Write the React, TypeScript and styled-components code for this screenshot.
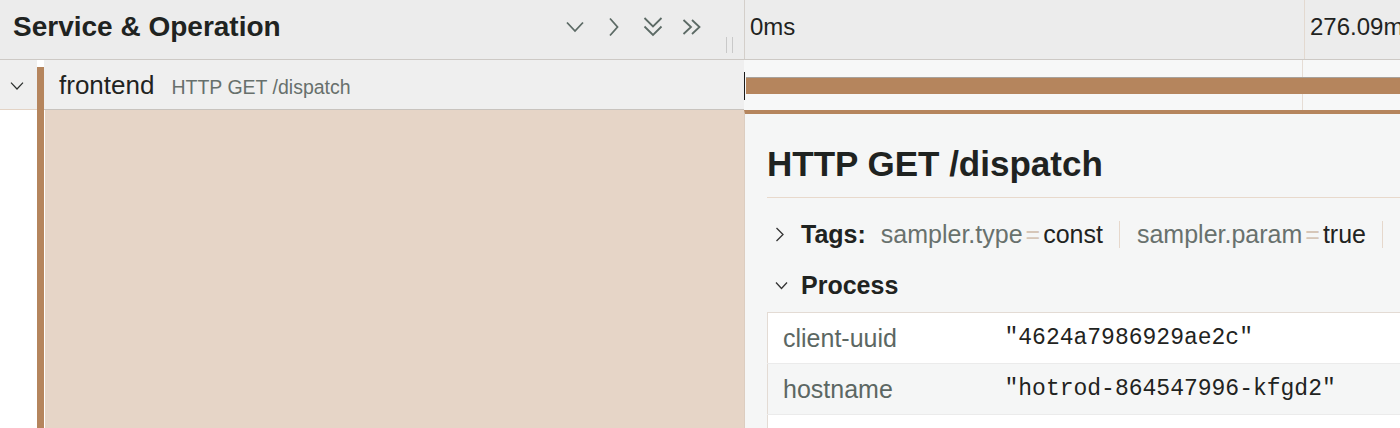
import React from 'react'
import styled, { createGlobalStyle } from 'styled-components';

const SERVICE_COLOR = '#b5855d';
const TICK_OFFSET = 559;

const GlobalStyle = createGlobalStyle`
  html, body {
    margin: 0;
    padding: 0;
    overflow: hidden;
    background: #ffffff;
  }
  body {
    font-family: "Liberation Sans", Arial, Helvetica, sans-serif;
    color: #1f2321;
  }
  * {
    box-sizing: border-box;
  }
`;

// only the rows that fit in view; the last one is the top of the next row
const processTags = [
    { key: 'client-uuid', value: '"4624a7986929ae2c"' },
    { key: 'hostname', value: '"hotrod-864547996-kfgd2"' },
    { key: '', value: '' },
];

const spanTags = [
    { key: 'sampler.type', value: 'const' },
    { key: 'sampler.param', value: 'true' },
];

const ChevronDown = ({ size = 24, stroke = 1.8 }: { size?: number, stroke?: number }) => (
    <svg width={size} height={size} viewBox="0 0 24 24" fill="none" stroke="currentColor" strokeWidth={stroke}>
        <polyline points="4,7.5 12,16 20,7.5" />
    </svg>
);

const ChevronRight = () => (
    <svg width="24" height="24" viewBox="0 0 24 24" fill="none" stroke="currentColor" strokeWidth="1.8">
        <polyline points="8,3.5 15.5,12 8,20.5" />
    </svg>
);

const DoubleDown = () => (
    <svg width="24" height="24" viewBox="0 0 24 24" fill="none" stroke="currentColor" strokeWidth="1.8">
        <polyline points="3.5,3 12,11.5 20.5,3" />
        <polyline points="3.5,11.5 12,20 20.5,11.5" />
    </svg>
);

const DoubleRight = () => (
    <svg width="24" height="24" viewBox="0 0 24 24" fill="none" stroke="currentColor" strokeWidth="1.8">
        <polyline points="3.5,5 11,12 3.5,19" />
        <polyline points="12,5 19.5,12 12,19" />
    </svg>
);

const App = () => {
    return (
        <>
            <GlobalStyle />
            <Page>
                {/* header START */}
                <Header>
                    <HeaderName>
                        <HeaderTitle>Service &amp; Operation</HeaderTitle>
                        <HeaderTools>
                            <ToolButton title="Expand +1"><ChevronDown /></ToolButton>
                            <ToolButton title="Collapse +1"><ChevronRight /></ToolButton>
                            <ToolButton title="Expand All"><DoubleDown /></ToolButton>
                            <ToolButton title="Collapse All"><DoubleRight /></ToolButton>
                        </HeaderTools>
                        <Resizer />
                    </HeaderName>
                    <Ticks>
                        <Tick>0ms</Tick>
                        <Tick>276.09ms</Tick>
                    </Ticks>
                </Header>
                {/* header END */}

                {/* span row START */}
                <SpanRow>
                    <NameCol>
                        <Gutter>
                            <RowToggle><ChevronDown size={18} stroke={1.6} /></RowToggle>
                        </Gutter>
                        <ServiceBar $offset={7} />
                        <NameContent>
                            <ServiceName>frontend</ServiceName>
                            <OperationName>HTTP GET /dispatch</OperationName>
                        </NameContent>
                    </NameCol>
                    <TimelineCol>
                        <SpanBar />
                    </TimelineCol>
                </SpanRow>
                {/* span row END */}

                {/* detail row START */}
                <DetailRow>
                    <DetailName>
                        <Gutter $white />
                        <ServiceBar $offset={0} />
                        <DetailFill />
                    </DetailName>
                    <DetailPanel>
                        <DetailTitle>HTTP GET /dispatch</DetailTitle>

                        <SectionHeader $gap={23}>
                            <SectionToggle>
                                <svg width="10" height="15" viewBox="0 0 10 15" fill="none" stroke="#333" strokeWidth="1.3">
                                    <polyline points="1.5,1 8,7.5 1.5,14" />
                                </svg>
                            </SectionToggle>
                            <SectionLabel>Tags:</SectionLabel>
                            <TagList>
                                {spanTags.map((tag) => (
                                    <TagItem key={tag.key}>
                                        <TagKey>{tag.key}</TagKey>
                                        <TagEq>=</TagEq>
                                        <TagValue>{tag.value}</TagValue>
                                    </TagItem>
                                ))}
                            </TagList>
                        </SectionHeader>

                        <SectionHeader $gap={24}>
                            <SectionToggle>
                                <svg width="13" height="9" viewBox="0 0 13 9" fill="none" stroke="#333" strokeWidth="1.3">
                                    <polyline points="1,1.5 6.5,7.5 12,1.5" />
                                </svg>
                            </SectionToggle>
                            <SectionLabel>Process</SectionLabel>
                        </SectionHeader>

                        <KVTable>
                            <tbody>
                                {processTags.map((row, i) => (
                                    <KVRow key={i}>
                                        <KVKey>{row.key}</KVKey>
                                        <KVValue>{row.value}</KVValue>
                                    </KVRow>
                                ))}
                            </tbody>
                        </KVTable>
                    </DetailPanel>
                </DetailRow>
                {/* detail row END */}
            </Page>
        </>
    )
}

const Page = styled.div`
width: 1400px;
height: 428px;
overflow: hidden;
display: flex;
flex-direction: column;
`;

const Header = styled.div`
display: flex;
height: 60px;
flex-shrink: 0;
background: #ececec;
border-bottom: 1px solid #cdc9c5;
`;

const HeaderName = styled.div`
width: 744px;
flex-shrink: 0;
display: flex;
align-items: center;
padding: 0 0 6px 13px;
`;

const HeaderTitle = styled.h3`
flex: 1;
margin: 0;
font-size: 28px;
line-height: 28px;
font-weight: 700;
color: #1f2321;
white-space: nowrap;
`;

const HeaderTools = styled.div`
display: flex;
align-items: center;
`;

const ToolButton = styled.button`
width: 39px;
height: 28px;
padding: 0;
border: none;
background: transparent;
color: #5c6a65;
display: flex;
align-items: center;
justify-content: center;
cursor: pointer;
`;

const Resizer = styled.div`
align-self: flex-end;
width: 7px;
height: 16px;
margin: 0 11px 0 15px;
border-left: 1px solid #c9c9c9;
border-right: 1px solid #c9c9c9;
`;

const Ticks = styled.div`
flex: 1;
display: grid;
grid-template-columns: ${TICK_OFFSET}px 1fr;
border-left: 1px solid #d4cfca;
`;

const Tick = styled.div`
display: flex;
align-items: center;
padding: 0 0 6px 5px;
font-size: 24px;
line-height: 24px;
color: #1f2321;
white-space: nowrap;

&:not(:first-child) {
    border-left: 1px solid #e3d9d0;
}
`;

const SpanRow = styled.div`
display: flex;
height: 50px;
flex-shrink: 0;
`;

const NameCol = styled.div`
width: 744px;
flex-shrink: 0;
display: flex;
`;

const Gutter = styled.div<{ $white?: boolean }>`
width: 37px;
flex-shrink: 0;
display: flex;
align-items: center;
justify-content: center;
background: ${({ $white }) => ($white ? '#ffffff' : '#efefef')};
border-bottom: ${({ $white }) => ($white ? 'none' : '1px solid #e3d3c5')};
`;

const RowToggle = styled.span`
display: flex;
color: #2a2e2c;
margin: 2px 0 0 -3px;
`;

const ServiceBar = styled.div<{ $offset: number }>`
width: 7px;
flex-shrink: 0;
margin-top: ${({ $offset }) => $offset}px;
background: ${SERVICE_COLOR};
`;

const NameContent = styled.div`
flex: 1;
display: flex;
align-items: baseline;
padding: 12px 0 0 15px;
background: #efefef;
border-bottom: 1px solid #c8c3be;
white-space: nowrap;
`;

const ServiceName = styled.span`
font-size: 26px;
line-height: 26px;
color: #1f2321;
`;

const OperationName = styled.span`
margin-left: 17px;
font-size: 19.5px;
color: #67706c;
`;

const TimelineCol = styled.div`
flex: 1;
position: relative;
padding-top: 17px;
background-color: #f7f8f8;
background-image: linear-gradient(
    to right,
    transparent ${TICK_OFFSET - 1}px,
    #e6ddd5 ${TICK_OFFSET - 1}px,
    #e6ddd5 ${TICK_OFFSET}px,
    transparent ${TICK_OFFSET}px
);

&::before {
    content: '';
    position: absolute;
    left: 0;
    top: 12px;
    width: 1px;
    height: 28px;
    background: #1a1a1a;
}
`;

const SpanBar = styled.div`
height: 17px;
margin-left: 2px;
background: ${SERVICE_COLOR};
border-top: 1px solid #a8a29c;
`;

const DetailRow = styled.div`
flex: 1;
display: flex;
`;

const DetailName = styled.div`
width: 744px;
flex-shrink: 0;
display: flex;
`;

const DetailFill = styled.div`
flex: 1;
margin-left: 1px;
background: #e6d5c7;
`;

const DetailPanel = styled.div`
flex: 1;
min-width: 0;
background: #f5f6f6;
border-top: 4px solid ${SERVICE_COLOR};
border-left: 1px solid #dccdc0;
padding-left: 22px;
`;

const DetailTitle = styled.h2`
margin: 32px 0 0;
padding-bottom: 16px;
font-size: 35px;
line-height: 35px;
font-weight: 700;
color: #1f2321;
border-bottom: 1px solid #e8d9cc;
white-space: nowrap;
`;

const SectionHeader = styled.div<{ $gap: number }>`
display: flex;
align-items: center;
height: 27px;
margin-top: ${({ $gap }) => $gap}px;
padding-left: 8px;
white-space: nowrap;
`;

const SectionToggle = styled.span`
width: 26px;
flex-shrink: 0;
display: flex;
align-items: center;
`;

const SectionLabel = styled.strong`
font-size: 25px;
line-height: 27px;
font-weight: 700;
color: #1f2321;
margin-right: 15px;
`;

const TagList = styled.div`
display: flex;
align-self: stretch;
`;

const TagItem = styled.div`
display: flex;
align-items: center;
padding: 0 16px 0 17px;
font-size: 25px;
line-height: 27px;
border-right: 1px solid #e6d8cc;

&:first-child {
    padding-left: 0;
}
`;

const TagKey = styled.span`
color: #68716d;
`;

const TagEq = styled.span`
color: #d6c6b8;
margin: 0 3px;
`;

const TagValue = styled.span`
color: #1f2321;
`;

const KVTable = styled.table`
margin-top: 13px;
width: 800px;
border-collapse: collapse;
background: #ffffff;
border: 1px solid #e3dbd4;
`;

const KVRow = styled.tr`
height: 51px;
border-bottom: 1px solid #ebebeb;

&:nth-child(even) {
    background: #f5f6f6;
}
`;

const KVKey = styled.td`
width: 222px;
padding: 0 0 0 15px;
font-size: 25px;
color: #5c6763;
vertical-align: middle;
`;

const KVValue = styled.td`
padding: 0 0 0 15px;
font-family: "Liberation Mono", "Courier New", monospace;
font-size: 23px;
color: #1f2321;
vertical-align: middle;
white-space: nowrap;
`;

export default App
